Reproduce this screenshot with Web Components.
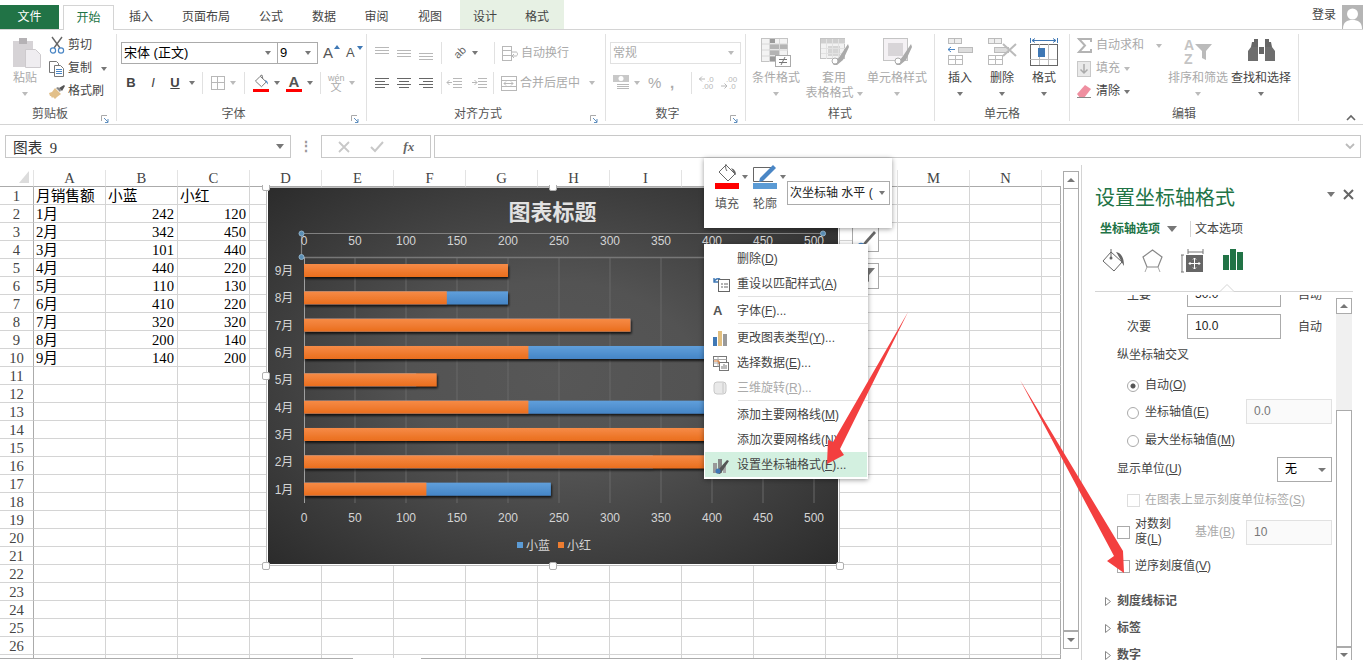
<!DOCTYPE html>
<html lang="zh-CN">
<head>
<meta charset="utf-8">
<title>Excel</title>
<style>
  html, body { margin: 0; height: 660px; overflow: hidden; background: #fff; }
  body { font: 12px/1.2 "Liberation Sans", "Noto Sans CJK SC", sans-serif; color: #444; }
</style>
</head>
<body>
<xl-app></xl-app>
<script>
// icon name -> [width, height, svg body]
const G = "#b8b8b8", D = "#666";
const hl = (x, y, w, c) => `<path d="M${x} ${y + .5}h${w}" stroke="${c}"/>`;
const grid3 = (x, y, w, h, c, f = "none") => `<rect x="${x + .5}" y="${y + .5}" width="${w}" height="${h}" fill="${f}" stroke="${c}"/>`;
const ICONS = {
  paste: [32, 30, `<g transform="translate(4 0)"><rect x="0" y="3" width="20" height="26" fill="#d6d3d6"/><rect x="6" y="0" width="8" height="6" fill="#b5b2b5"/><path d="M12.500 11.500h10l5 5v13h-15z" fill="#efedf0" stroke="#cdcacd"/></g>`],
  cut: [16, 17, `<path d="M3 0l8 11M13 0L5 11" stroke="#666" stroke-width="1.4" fill="none"/><circle cx="4" cy="13.500" r="2.600" fill="none" stroke="#4a86c5" stroke-width="1.200"/><circle cx="12" cy="13.500" r="2.600" fill="none" stroke="#4a86c5" stroke-width="1.200"/>`],
  copy: [16, 16, `<path d="M.5.5h7l2 2v9h-9z" fill="#fff" stroke="#777"/><path d="M5.500 4.500h6l3 3v8h-9z" fill="#fff" stroke="#777"/>${hl(7, 8, 6, "#4a86c5")}${hl(7, 10, 6, "#4a86c5")}${hl(7, 12, 6, "#4a86c5")}`],
  brush: [16, 14, `<path d="M0 8l3-1 3-4 6 6-4 3-2 2-2-2-1 1-1-2-1 0z" fill="#e2c08a"/><path d="M7 3l2-1 3 3-1 2z" fill="#888"/><path d="M10 3l5-3 1 1-3 5z" fill="#555"/>`],
  bucket: [17, 15, `<path d="M7 1.500l7 6.500-5.500 5.500-7-6.500z" fill="#fff" stroke="#666"/><path d="M7 1l2-1 1 4" fill="none" stroke="#666"/><path d="M12 6c3 0 4 2 4 5-1-1-2-3-4-5z" fill="#4a86c5"/>`],
  border: [14, 14, `${grid3(0, 0, 13, 13, G)}${hl(0, 6, 13, G)}<path d="M6.500 0v13" stroke="${G}"/>`],
  at: [14, 14, hl(0, 1, 14, G) + hl(0, 4, 14, G) + hl(0, 7, 14, G)],
  am: [14, 14, hl(0, 4, 14, G) + hl(0, 7, 14, G) + hl(0, 10, 14, G)],
  ab: [14, 14, hl(0, 7, 14, G) + hl(0, 10, 14, G) + hl(0, 13, 14, G)],
  al: [14, 12, hl(0, 1, 14, D) + hl(0, 4, 10, D) + hl(0, 7, 14, D) + hl(0, 10, 10, D)],
  ac: [14, 12, hl(0, 1, 14, D) + hl(2, 4, 10, D) + hl(0, 7, 14, D) + hl(2, 10, 10, D)],
  ar: [14, 12, hl(0, 1, 14, D) + hl(4, 4, 10, D) + hl(0, 7, 14, D) + hl(4, 10, 10, D)],
  indl: [15, 12, hl(6, 1, 9, G) + hl(6, 4, 9, G) + hl(6, 7, 9, G) + hl(6, 10, 9, G) + `<path d="M0 5.500h5M2.500 3L0 5.500 2.500 8" stroke="${G}" fill="none"/>`],
  indr: [15, 12, hl(6, 1, 9, G) + hl(6, 4, 9, G) + hl(6, 7, 9, G) + hl(6, 10, 9, G) + `<path d="M0 5.500h5M2.500 3L5 5.500 2.500 8" stroke="${G}" fill="none"/>`],
  wrap: [16, 15, `${grid3(0, 0, 9, 14, G)}${hl(0, 4, 9, G)}${hl(0, 9, 9, G)}<path d="M9 6h5c2 0 2 4 0 4h-3M12 8l-2 2 2 2" stroke="${G}" fill="none"/>`],
  merge: [16, 15, `${grid3(0, 0, 15, 14, G)}${hl(0, 4, 15, G)}${hl(0, 10, 15, G)}<path d="M3 7.500h9M5 5.500l-2 2 2 2M10 5.500l2 2-2 2" stroke="${G}" fill="none"/>`],
  money: [17, 16, `<rect x="0" y="0" width="16" height="7" fill="#c8c8c8"/><circle cx="8" cy="3.500" r="2.500" fill="#fff"/>${hl(4, 9, 12, G)}${hl(4, 11, 12, G)}${hl(4, 13, 12, G)}`],
  incd: [17, 17, `<path d="M0 4h6M3 1.500L.5 4 3 6.500" stroke="${G}" fill="none"/><text x="8" y="7" font-size="8" fill="${G}">.0</text><text x="3" y="14" font-size="8" fill="${G}">.00</text>`],
  decd: [17, 17, `<text x="5" y="7" font-size="8" fill="${G}">.00</text><path d="M0 11h6M3.500 8.500L6 11 3.500 13.500" stroke="${G}" fill="none"/><text x="8" y="14" font-size="8" fill="${G}">.0</text>`],
  cond: [30, 28, `<rect x=".5" y=".5" width="26" height="23" fill="#f3f3f3" stroke="#c4c4c4"/><rect x="8" y="1" width="6" height="4" fill="#9b9b9b"/><rect x="8" y="6" width="18" height="5" fill="#b4b4b4"/><rect x="8" y="12" width="10" height="5" fill="#b4b4b4"/><rect x="8" y="18" width="6" height="5" fill="#9b9b9b"/><path d="M8.500 1v23M18.500 1v23M1 6h26M1 12h26M1 18h26" stroke="#d8d8d8" fill="none"/><rect x="14.500" y="17.500" width="15" height="11" fill="#fff" stroke="#aaa"/><path d="M18 21.500h8M18 24.500h8M24 19l-4 8" stroke="#777" fill="none"/>`],
  tbl: [29, 28, `<rect x=".5" y=".5" width="24" height="20" fill="#f2f2f2" stroke="#c4c4c4"/><rect x="1" y="1" width="24" height="4" fill="#cfcfcf"/><rect x="8" y="8" width="12" height="10" fill="#d5d5d5"/><path d="M6.500 1v20M12.500 1v20M18.500 1v20M1 5.500h24M1 10.500h24M1 15.500h24" stroke="#e2e2e2" fill="none"/><path d="M13 27l7-9 8-12 1 3-6 13-6 5z" fill="#aaa"/><circle cx="15" cy="23" r="3" fill="#fff" stroke="#aaa"/>`],
  sty: [29, 28, `<rect x=".5" y=".5" width="24" height="22" fill="#f4f1f4" stroke="#c4c4c4"/><rect x="5" y="5" width="15" height="13" fill="#d8d5d8"/><path d="M13 27l7-9 8-12 1 3-6 13-6 5z" fill="#aaa"/><circle cx="15" cy="23" r="3" fill="#fff" stroke="#aaa"/>`],
  ins: [26, 27, `${grid3(1, 0, 13, 5, "#bbb", "#eee")}<path d="M7.500 0v5" stroke="#bbb"/>${grid3(11, 9, 14, 5, "#bbb", "#ddd")}<path d="M1 11.500h7M4 9l-3 2.500L4 14" stroke="#4a86c5" fill="none"/>${grid3(1, 17, 14, 9, "#bbb", "#fff")}${hl(1, 21, 14, "#bbb")}<path d="M8.500 17v9" stroke="#bbb"/>`],
  del: [30, 27, `${grid3(1, 0, 13, 5, "#bbb", "#eee")}<path d="M7.500 0v5" stroke="#bbb"/>${grid3(7, 9, 14, 5, "#bbb", "#ddd")}${grid3(1, 17, 14, 9, "#bbb", "#fff")}${hl(1, 21, 14, "#bbb")}<path d="M8.500 17v9" stroke="#bbb"/><path d="M16 6l13 12M29 6L16 18" stroke="#bbb" stroke-width="2" fill="none"/>`],
  fmt: [28, 28, `<path d="M.5 0v5M27.500 0v5M2 2.500h24M5 .5L2 2.500l3 2M23 .5l3 2-3 2" stroke="#3f78b5" fill="none"/>${grid3(0, 6, 27, 21, "#666", "#fff")}<path d="M9.500 6v21M18.500 6v21M0 21.500h27" stroke="#bbb" fill="none"/><rect x="8" y="10" width="7" height="9" fill="#3f78b5"/>`],
  sigma: [16, 15, `<path d="M1 1h14M14 4V1H2l6 6.500L2 14h12v-3" fill="none" stroke="#b4b4b4" stroke-width="2"/>`],
  fill: [15, 16, `<rect x=".5" y=".5" width="13" height="15" fill="#e9e9e9" stroke="#c8c8c8"/><path d="M7 3v9M3.500 8.500L7 12l3.500-3.500" stroke="#aaa" fill="none" stroke-width="1.500"/>`],
  erase: [14, 13, `<path d="M0 9l8-9 6 4-7 9H3z" fill="#ef8fa0"/><path d="M0 12.500h14" stroke="#888"/>`],
  sort: [30, 30, `<text x="1" y="12" font-size="14" font-weight="700" fill="#c4c4c4">A</text><text x="1" y="26" font-size="14" font-weight="700" fill="#c4c4c4">Z</text><path d="M12 6h17l-6 7v9l-4-2v-7z" fill="#bbb"/>`],
  find: [27, 24, `<path d="M3 9h7V1H6v3H4zM17 9h7l-1-5h-2V1h-4z" fill="#666"/><path d="M0 23V13l3-4h7v14zM17 23V9h7l3 4v10z" fill="#6e6e6e"/><rect x="11" y="9" width="5" height="7" fill="#666"/>`],
  pbars: [15, 15, `<rect y="6" width="4" height="9" fill="#3f78b5"/><rect x="5" y="0" width="4" height="15" fill="#e2bf7f"/><rect x="10" y="3" width="4" height="12" fill="#9a9a9a"/>`],
  reset: [17, 15, `<rect x="5.500" y="2.500" width="11" height="12" fill="#fff" stroke="#666"/><path d="M8 7h2M11 7h4M8 10h2M11 10h4" stroke="#666"/><path d="M1 5c1-3 4-4 6-3M1 1v4h4" stroke="#3f78b5" fill="none" stroke-width="1.400"/>`],
  seldata: [16, 15, `<rect x=".5" y=".5" width="13" height="10" fill="#fff" stroke="#777"/><path d="M.5 3.500h13M.5 7h13M5 .5v10" stroke="#aaa"/><rect x="6.500" y="6.500" width="9" height="8" fill="#fff" stroke="#777"/><path d="M9 13v-3M11 13V8M13 13v-4" stroke="#777"/><path d="M1 5h5v3" stroke="#d9742b" fill="none"/>`],
  cube: [14, 14, `<rect x="1" y="1" width="12" height="12" rx="3" fill="#e9e9e9" stroke="#c8c8c8"/><path d="M10 2v10" stroke="#c8c8c8"/>`],
  axis: [16, 17, `<rect x="0" y="6" width="4" height="10" fill="#999"/><rect x="5" y="2" width="4" height="14" fill="#888"/><rect x="10" y="7" width="3" height="9" fill="#aaa"/><path d="M3 16l3-4 8-9 2 1-6 9-3 4z" fill="#555"/><circle cx="5" cy="14" r="2.500" fill="#3f78b5"/>`],
  mfill: [24, 22, `<path d="M11 2l9 9-7 7-9-9z" fill="#fff" stroke="#666"/><path d="M11 1c-1 3 0 6 1 7" fill="none" stroke="#666"/><path d="M16 5c3 1 5 3 5 7-2-1-3-4-5-7z" fill="#666"/>`],
  mline: [24, 22, `<path d="M20 4.500H.5v14H20" fill="none" stroke="#666"/><path d="M7 15l13-13 3 3-13 13-4 1z" fill="#4a86c5"/>`],
  pfill: [24, 24, `<path d="M10 3l11 10-8 9L2 12z" fill="#fff" stroke="#666"/><path d="M10 0v9" stroke="#666"/><circle cx="10" cy="9" r="1.500" fill="#666"/><path d="M15 3c5 1 8 5 8 14-2-3-4-8-8-14z" fill="#666"/>`],
  ppent: [21, 24, `<path d="M10.500 1L20 8l-4 10H5L1 8z" fill="#fff" stroke="#888" stroke-width="1.200"/><path d="M5 18l-2 5M16 18l2 5" stroke="#aaa"/>`],
  psize: [22, 24, `<path d="M7 3h15M7 0v5M22 0v5M1 6v17M0 6h3M0 23h3" stroke="#777" fill="none"/><rect x="5" y="6" width="17" height="17" fill="#666"/><path d="M13.500 9v11M8 14.500h11M12 10.500l1.500-1.500 1.500 1.500M12 18.500l1.500 1.500 1.500-1.500M9.500 13L8 14.500 9.500 16M17.500 13l1.500 1.500-1.500 1.500" stroke="#fff" fill="none"/>`],
  pbar: [20, 21, `<rect x="0" y="6" width="6" height="15" fill="#217346"/><rect x="7" y="0" width="6" height="21" fill="#217346"/><rect x="14" y="3" width="6" height="18" fill="#217346"/>`]
};
const I = (n, style = "") => {
  const [w, h, b] = ICONS[n];
  return `<svg width="${w}" height="${h}" viewBox="0 0 ${w} ${h}" style="flex:none;display:block;overflow:visible;${style}">${b}</svg>`;
};

class XlTabs extends HTMLElement {
  constructor() {
    super();
    const tabs = [["插入", 54], ["页面布局", 76], ["公式", 54], ["数据", 52], ["审阅", 53], ["视图", 54]];
    this.attachShadow({ mode: "open" }).innerHTML = `
      <style>
        :host { display: flex; height: 30px; box-sizing: border-box; border-bottom: 1px solid #d4d4d4; }
        div { height: 29px; padding-top: 5px; box-sizing: border-box; text-align: center; line-height: 24px; color: #444; flex: none; }
        .file { width: 59px; height: 24px; margin-top: 5px; padding: 0; background: #217346; color: #fff; margin-right: 4px; }
        .on { width: 51px; height: 25px; margin-top: 5px; padding: 0; background: #fff; color: #217346; border: 1px solid #d4d4d4; border-bottom: 0; }
        .ctx { background: #e7f1e4; }
        .user { margin-left: auto; display: flex; padding: 5px 0 0; line-height: 20px; }
        .pic { width: 21px; height: 24px; margin-left: 6px; padding: 0; background: #b5b5b5; }
      </style>
      <div class="file">文件</div><div class="on">开始</div>
      ${tabs.map(([t, w]) => `<div style="width:${w}px">${t}</div>`).join("")}
      <div class="ctx" style="width:50px;margin-left:3px">设计</div><div class="ctx" style="width:54px">格式</div>
      <div class="user"><span>登录</span><div class="pic"><svg width="21" height="24"><circle cx="10.500" cy="9" r="5.500" fill="#fff"/><path d="M1 24c0-7 4-9 9.500-9S20 17 20 24z" fill="#fff"/></svg></div></div>`;
  }
}
customElements.define("xl-tabs", XlTabs);

class XlGroup extends HTMLElement {
  constructor() {
    super();
    const launch = this.hasAttribute("launcher");
    this.attachShadow({ mode: "open" }).innerHTML = `
      <style>
        :host { display: flex; flex-direction: column; box-sizing: border-box; flex: none; height: 87px; border-right: 1px solid #e1e1e1; position: relative; }
        .body { height: 70px; display: flex; }
        .lab { display: flex; height: 17px; line-height: 20px; color: #555; }
        .lab span { flex: 1; text-align: center; white-space: nowrap; }
        .launch { width: 16px; flex: none; padding-top: 6px; box-sizing: border-box; }
      </style>
      <div class="body"><slot></slot></div>
      <div class="lab"><span>${this.getAttribute("label")}</span>${launch ? `<div class="launch"><svg width="10" height="10"><path d="M1.500 7V1.500H7" stroke="#aaa" fill="none"/><path d="M4 4l4 4M8 5v3.500H5" stroke="#5f8fbf" fill="none"/></svg></div>` : ""}</div>`;
  }
}
customElements.define("xl-group", XlGroup);

class XlRibbon extends HTMLElement {
  constructor() {
    super();
    const css = `
      :host { display: flex; height: 95px; box-sizing: border-box; border-bottom: 1px solid #d4d4d4; padding-top: 4px; position: relative; }
      .big { display: flex; flex-direction: column; align-items: center; flex: none; color: #444; }
      .big .ic { height: 37px; padding-top: 4px; box-sizing: border-box; }
      .big span, .big .ln { height: 15px; line-height: 15px; white-space: nowrap; display: flex; align-items: center; }
      .off, .off * { color: #aaa; }
      .col { display: flex; flex-direction: column; flex: none; }
      .sm { height: 23px; display: flex; align-items: center; white-space: nowrap; }
      .stack { flex: none; padding-top: 8px; box-sizing: border-box; }
      .row { height: 22px; display: flex; align-items: center; margin-bottom: 8px; }
      .dn { flex: none; width: 0; height: 0; border: 3.500px solid transparent; border-top: 4px solid #777; border-bottom: 0; }
      .dn.d { border-top-color: #bbb; }
      .sep { flex: none; width: 1px; height: 22px; background: #e1e1e1; }
      .sel { box-sizing: border-box; height: 22px; border: 1px solid #ababab; display: flex; align-items: center; padding: 0 6px 0 2px; flex: none; color: #000; font-size: 13px; }
      .sel .dn { margin-left: auto !important; }
      .sel.off { border-color: #e1e1e1; color: #aaa; font-size: 12px; }
      .b { flex: none; width: 20px; text-align: center; font-size: 13px; color: #444; }
      .u { width: 16px; flex: none; display: flex; flex-direction: column; align-items: center; }
      .u i { display: block; width: 16px; height: 3px; background: #f00; margin-top: 1px; }
      .ltr { font-size: 15px; line-height: 13px; font-weight: 700; color: #555; }
      .tiny { font-size: 9px; line-height: 9px; color: #aaa; text-align: center; }
      .grow { flex: none; font-size: 15px; color: #555; position: relative; width: 14px; }
      .grow i { position: absolute; right: -3px; top: 1px; width: 0; height: 0; border: 3px solid transparent; border-bottom: 4px solid #3f78b5; border-top: 0; }
      .grow.s { font-size: 13px; } .grow.s i { border-bottom: 0; border-top: 4px solid #3f78b5; }
      .hide { flex: none; align-self: flex-end; margin: 0 0 3px 47px; }
    `;
    const dn = (ml = 0, d = false) => `<b class="dn${d ? " d" : ""}" style="margin-left:${ml}px"></b>`;
    const sep = ml => `<b class="sep" style="margin-left:${ml}px"></b>`;
    const big = (icon, w, l1, l2 = dn(), off = false, ml = 0) =>
      `<div class="big${off ? " off" : ""}" style="width:${w}px;margin-left:${ml}px"><div class="ic">${I(icon)}</div><span>${l1}</span><div class="ln">${l2}</div></div>`;
    this.attachShadow({ mode: "open" }).innerHTML = `
      <style>${css}</style>
      <xl-group label="剪贴板" launcher style="width:117px">
        ${big("paste", 30, "粘贴", dn(0, true), true, 10)}
        <div class="col" style="margin-left:9px">
          <div class="sm">${I("cut", "margin-right:3px")}剪切</div>
          <div class="sm">${I("copy", "margin-right:3px")}复制${dn(9)}</div>
          <div class="sm">${I("brush", "margin-right:3px")}格式刷</div>
        </div>
      </xl-group>
      <xl-group label="字体" launcher style="width:250px">
        <div class="stack" style="margin-left:4px">
          <div class="row">
            <div class="sel" style="width:157px">宋体 (正文)${dn()}</div>
            <div class="sel" style="width:41px;margin-left:-1px">9${dn()}</div>
            <span class="grow" style="margin-left:5px">A<i></i></span>
            <span class="grow s" style="margin-left:9px">A<i></i></span>
          </div>
          <div class="row">
            <b class="b">B</b><i class="b" style="margin-left:2px">I</i><u class="b" style="margin-left:2px;font-weight:700">U</u>${dn(4)}${sep(7)}
            <span style="margin-left:8px">${I("border")}</span>${dn(5, true)}${sep(8)}
            <span class="u" style="margin-left:8px">${I("bucket", "width:15px;height:13px")}<i></i></span>${dn(5)}
            <span class="u" style="margin-left:6px"><span class="ltr">A</span><i></i></span>${dn(5)}${sep(7)}
            <span class="tiny" style="margin-left:7px;width:16px">wén<br><span style="font-size:11px">文</span></span>${dn(5, true)}
          </div>
        </div>
      </xl-group>
      <xl-group label="对齐方式" launcher style="width:239px">
        <div class="stack" style="margin-left:8px">
          <div class="row">
            ${I("at")}<span style="margin-left:8px">${I("am")}</span><span style="margin-left:8px">${I("ab")}</span>${sep(8)}
            <span style="margin-left:8px;width:20px;transform:rotate(-45deg);color:#666;font-size:11px;text-align:center">ab</span>${dn(2)}${sep(16)}
            <span style="margin-left:7px">${I("wrap")}</span><span class="off" style="margin-left:3px;white-space:nowrap">自动换行</span>
          </div>
          <div class="row">
            ${I("al")}<span style="margin-left:8px">${I("ac")}</span><span style="margin-left:8px">${I("ar")}</span>${sep(8)}
            <span style="margin-left:5px">${I("indl")}</span><span style="margin-left:10px">${I("indr")}</span>${sep(6)}
            <span style="margin-left:7px">${I("merge")}</span><span class="off" style="margin-left:3px;white-space:nowrap">合并后居中</span>${dn(9, true)}
          </div>
        </div>
      </xl-group>
      <xl-group label="数字" launcher style="width:140px">
        <div class="stack" style="margin-left:4px">
          <div class="row"><div class="sel off" style="width:131px">常规${dn(0, true)}</div></div>
          <div class="row">
            <span style="margin-left:3px">${I("money")}</span>${dn(4, true)}
            <span class="off" style="margin-left:8px;font-size:15px;width:16px">%</span>
            <span class="off" style="margin-left:6px;font-size:15px;width:12px;font-weight:700">,</span>${sep(9)}
            <span style="margin-left:7px">${I("incd")}</span><span style="margin-left:5px">${I("decd")}</span>
          </div>
        </div>
      </xl-group>
      <xl-group label="样式" style="width:189px">
        ${big("cond", 60, "条件格式", dn(0, true), true)}
        ${big("tbl", 56, "套用", "表格格式" + dn(3, true), true)}
        ${big("sty", 70, "单元格样式", dn(0, true), true)}
      </xl-group>
      <xl-group label="单元格" style="width:135px">
        ${big("ins", 42, "插入", dn(), false, 4)}
        ${big("del", 42, "删除")}
        ${big("fmt", 42, "格式")}
      </xl-group>
      <xl-group label="编辑" style="width:229px">
        <div class="col" style="margin-left:7px;width:85px">
          <div class="sm off">${I("sigma", "margin-right:3px")}自动求和${dn(12, true)}</div>
          <div class="sm off">${I("fill", "margin-right:4px")}填充${dn(4, true)}</div>
          <div class="sm">${I("erase", "margin:0 5px 0 0")}清除${dn(4)}</div>
        </div>
        ${big("sort", 72, "排序和筛选", dn(0, true), true)}
        ${big("find", 54, "查找和选择")}
      </xl-group>
      <svg class="hide" width="10" height="7"><path d="M1 6l4-4 4 4" stroke="#666" stroke-width="1.600" fill="none"/></svg>`;
  }
}
customElements.define("xl-ribbon", XlRibbon);

class XlFormula extends HTMLElement {
  constructor() {
    super();
    this.attachShadow({ mode: "open" }).innerHTML = `
      <style>
        :host { display: flex; height: 40px; padding: 10px 2px 0 5px; box-sizing: border-box; }
        div { box-sizing: border-box; height: 23px; border: 1px solid #c8c8c8; flex: none; display: flex; align-items: center; }
        .name { width: 286px; padding: 0 6px 0 7px; font: 14.670px "Liberation Serif", "Noto Sans CJK SC", serif; color: #333; white-space: pre; }
        .dn { margin-left: auto; width: 0; height: 0; border: 4px solid transparent; border-top: 5px solid #777; border-bottom: 0; }
        .dots { width: 30px; border: 0; justify-content: center; color: #999; font-size: 14px; font-weight: 700; }
        .fx { width: 110px; margin-right: 3px; justify-content: space-around; padding: 0 6px; color: #c8c8c8; }
        .fx i { font: italic 700 13px "Liberation Serif", serif; color: #666; }
        .in { flex: 1; justify-content: flex-end; padding-right: 4px; }
      </style>
      <div class="name">图表  9<b class="dn"></b></div>
      <div class="dots">⋮</div>
      <div class="fx">
        <svg width="12" height="12"><path d="M1 1l10 10M11 1L1 11" stroke="#c8c8c8" stroke-width="1.800"/></svg>
        <svg width="14" height="12"><path d="M1 6l4 4 8-9" stroke="#c8c8c8" stroke-width="2" fill="none"/></svg>
        <i>fx</i>
      </div>
      <div class="in"><svg width="12" height="8"><path d="M2 1l4 4 4-4" stroke="#bbb" stroke-width="1.800" fill="none"/></svg></div>`;
  }
}
customElements.define("xl-formula", XlFormula);

class XlSheet extends HTMLElement {
  constructor() {
    super();
    const data = [["月销售额", "小蓝", "小红"], ["1月", 242, 120], ["2月", 342, 450], ["3月", 101, 440], ["4月", 440, 220], ["5月", 110, 130], ["6月", 410, 220], ["7月", 320, 320], ["8月", 200, 140], ["9月", 140, 200]];
    const cols = "ABCDEFGHIJKLMN".split("");
    let cells = `<div class="h corner"><svg width="12" height="14"><path d="M11 1v12H1z" fill="#dcdcdc"/></svg></div>`;
    cols.forEach(c => { cells += `<div class="h">${c}</div>`; });
    cells += `<div class="h end"></div>`;
    for (let r = 1; r <= 27; r++) {
      cells += `<div class="rh">${r <= 26 ? r : ""}</div>`;
      for (let c = 0; c < 14; c++) {
        const v = data[r - 1] ? data[r - 1][c] : undefined;
        cells += `<div class="c${typeof v === "number" ? " n" : ""}">${v === undefined ? "" : v}</div>`;
      }
      cells += `<div class="c end"></div>`;
    }
    this.attachShadow({ mode: "open" }).innerHTML = `
      <style>
        :host { display: flex; flex-direction: column; width: 1081px; flex: none; padding-top: 5px; box-sizing: border-box; position: relative; height: 495px; }
        .top { display: flex; height: 488px; overflow: hidden; flex: none; }
        .grid { display: grid; grid-template-columns: 34px repeat(14, 72px) 19px; grid-template-rows: 17px; grid-auto-rows: 18px; width: 1061px; flex: none; font: 14.670px/17px "Liberation Serif", "Noto Sans CJK SC", serif; color: #000; }
        .h, .rh, .c { box-sizing: border-box; overflow: hidden; white-space: nowrap; }
        .h { border-right: 1px solid #e3e3e3; border-bottom: 1px solid #ababab; text-align: center; color: #444; }
        .h.end { border-right: 0; width: 19px; }
        .corner { display: flex; justify-content: flex-end; padding-right: 3px; }
        .rh { border-right: 1px solid #ababab; border-bottom: 1px solid #d4d4d4; text-align: center; color: #444; line-height: 19px; }
        .c { border-right: 1px solid #d4d4d4; border-bottom: 1px solid #d4d4d4; padding: 0 2px; line-height: 19px; }
        .c.n { text-align: right; padding-right: 3px; }
        .c.end { border-right-color: #ababab; }
        .bar { width: 16px; flex: none; margin: 1px 0 0 2px; border: 1px solid #ababab; border-width: 0 1px; height: 472px; box-sizing: border-box; display: flex; flex-direction: column; }
        .btn { height: 16px; flex: none; border: 1px solid #ababab; margin: 0 -1px; display: flex; align-items: center; justify-content: center; }
        .up { width: 0; height: 0; border: 4px solid transparent; border-bottom: 4px solid #777; border-top: 0; }
        .down { margin-top: auto; border-width: 1px; }
        .down i { width: 0; height: 0; border: 4px solid transparent; border-top: 4px solid #777; border-bottom: 0; }
        .thumb { height: 441px; border-bottom: 1px solid #ababab; flex: none; }
        .foot { display: flex; height: 7px; flex: none; }
        .foot i { display: block; border-top: 1px solid #ababab; }
      </style>
      <div class="top">
        <div class="grid">${cells}</div>
        <div class="bar"><div class="btn"><b class="up"></b></div><div class="thumb"></div><div class="btn down"><i></i></div></div>
      </div>
      <div class="foot"><i style="width:353px"></i><i style="width:640px;margin-left:68px"></i></div>
      <slot></slot>`;
  }
}
customElements.define("xl-sheet", XlSheet);

class XlChart extends HTMLElement {
  constructor() {
    super();
    const X = v => 304 + v * 1.02;
    const vals = [[140, 200, "9月"], [200, 140, "8月"], [320, 320, "7月"], [410, 220, "6月"], [110, 130, "5月"], [440, 220, "4月"], [101, 440, "3月"], [342, 450, "2月"], [242, 120, "1月"]];
    let s = "";
    const ticks = [0, 50, 100, 150, 200, 250, 300, 350, 400, 450, 500];
    ticks.slice(1).forEach(t => { s += `<path d="M${X(t)} 257V503" stroke="#686868"/>`; });
    s += `<path d="M301 257.500H814" stroke="#777" stroke-width="1.500"/><path d="M304.500 257V503" stroke="#a0a0a0"/>`;
    s += `<path d="M301.500 257V233.500H823" fill="none" stroke="#808080" stroke-width="1.200"/>`;
    ticks.forEach(t => {
      s += `<text x="${X(t)}" y="245" class="t">${t}</text><text x="${X(t)}" y="522" class="t">${t}</text>`;
    });
    vals.forEach(([b, r, m], i) => {
      const y = 264 + i * 27.33;
      s += `<text x="284" y="${y + 11}" class="t">${m}</text>`;
      s += `<g filter="url(#sh)"><rect x="304" y="${y}" width="${b * 1.02}" height="13" fill="url(#bl)"/><rect x="304" y="${y}" width="${r * 1.02}" height="13" fill="url(#or)"/></g>`;
    });
    s += [[301.5, 233.5], [301.5, 257], [823, 233.5]].map(([x, y]) => `<circle cx="${x}" cy="${y}" r="2.500" fill="#5b8fb5" stroke="#8fb2cc"/>`).join("");
    const handle = (x, y) => `<rect x="${x - 3.5}" y="${y - 3.5}" width="7" height="7" rx="1.500" fill="#fff" stroke="#b0b0b0"/>`;
    this.attachShadow({ mode: "open" }).innerHTML = `
      <style>
        :host { display: block; position: absolute; left: 260px; top: 20px; width: 590px; height: 390px; }
        svg { display: block; }
        text { font-family: "Liberation Sans", "Noto Sans CJK SC", sans-serif; }
        .t { font-size: 12px; fill: #d4d4d4; text-anchor: middle; }
      </style>
      <svg width="590" height="390" viewBox="260 185 590 390">
        <defs>
          <radialGradient id="bg" cx="50%" cy="50%" r="72%"><stop offset="0" stop-color="#575757"/><stop offset=".35" stop-color="#535353"/><stop offset="1" stop-color="#2a2a2a"/></radialGradient>
          <linearGradient id="or" x1="0" y1="0" x2="0" y2="1"><stop offset="0" stop-color="#f68b47"/><stop offset="1" stop-color="#ea6e1d"/></linearGradient>
          <linearGradient id="bl" x1="0" y1="0" x2="0" y2="1"><stop offset="0" stop-color="#609fdb"/><stop offset="1" stop-color="#4585c6"/></linearGradient>
          <filter id="sh" x="-5%" y="-30%" width="110%" height="190%"><feDropShadow dx="1" dy="2" stdDeviation="1.200" flood-color="#000" flood-opacity=".75"/></filter>
        </defs>
        <rect x="266.500" y="187.500" width="573" height="378" fill="#fff" stroke="#bdbdbd"/>
        <rect x="268" y="188" width="570" height="376" fill="url(#bg)"/>
        <text x="552.500" y="220" text-anchor="middle" style="font-size:22px;font-weight:700;fill:#e2e2e2">图表标题</text>
        ${s}
        <rect x="517" y="542" width="6" height="6" fill="#5b9bd5"/>
        <text x="526" y="550" style="font-size:12px;fill:#d4d4d4">小蓝</text>
        <rect x="558" y="542" width="6" height="6" fill="#ed7d31"/>
        <text x="567" y="550" style="font-size:12px;fill:#d4d4d4">小红</text>
        ${handle(266, 187)}${handle(553, 187)}${handle(266, 376)}${handle(266, 566)}${handle(553, 566)}${handle(840, 566)}
      </svg>`;
  }
}
customElements.define("xl-chart", XlChart);

class XlChartTools extends HTMLElement {
  constructor() {
    super();
    this.attachShadow({ mode: "open" }).innerHTML = `
      <style>
        :host { position: absolute; left: 852px; top: 61px; display: flex; flex-direction: column; gap: 11px; width: 26px; }
        div { box-sizing: border-box; width: 27px; height: 26px; background: #fff; border: 1px solid #a8a8a8; }
        svg { display: block; }
      </style>
      <div><svg width="25" height="24"><path d="M9 18l4-5 8-9 2 2-8 9-5 5z" fill="#666"/><circle cx="8" cy="20" r="3.500" fill="none" stroke="#4a86c5" stroke-width="1.400"/></svg></div>
      <div><svg width="25" height="24"><path d="M8 4h14l-6 7v7l-3-2v-5z" fill="#777"/></svg></div>`;
  }
}
customElements.define("xl-chart-tools", XlChartTools);

class XlMinibar extends HTMLElement {
  constructor() {
    super();
    this.attachShadow({ mode: "open" }).innerHTML = `
      <style>
        :host { position: absolute; left: 704px; top: -7px; box-sizing: border-box; width: 188px; height: 70px; background: #fff; box-shadow: 0 1px 5px rgba(0,0,0,.4); display: flex; padding: 5px 0 0 11px; color: #555; }
        .b { display: flex; flex-direction: column; align-items: center; width: 24px; flex: none; }
        .b i { display: block; width: 24px; height: 6px; margin-top: -2px; }
        .b span { margin-top: 8px; line-height: 15px; white-space: nowrap; }
        .dn { flex: none; margin: 12px 0 0 3px; width: 0; height: 0; border: 3.500px solid transparent; border-top: 4px solid #777; border-bottom: 0; }
        .sel { box-sizing: border-box; flex: none; width: 103px; height: 24px; margin: 18px 0 0 1px; border: 1px solid #ababab; display: flex; align-items: center; padding: 0 4px 0 2px; color: #222; white-space: pre; overflow: hidden; }
        .sel .dn { margin: 0 0 0 auto; }
      </style>
      <div class="b">${I("mfill")}<i style="background:#f00"></i><span>填充</span></div><b class="dn"></b>
      <div class="b" style="margin-left:5px">${I("mline")}<i style="background:#5b9bd5"></i><span>轮廓</span></div><b class="dn"></b>
      <div class="sel">次坐标轴 水平 (<b class="dn"></b></div>`;
  }
}
customElements.define("xl-minibar", XlMinibar);

class XlMenuItem extends HTMLElement {
  constructor() {
    super();
    const icon = this.getAttribute("icon");
    this.attachShadow({ mode: "open" }).innerHTML = `
      <style>
        :host { display: flex; align-items: center; height: 25px; box-sizing: border-box; white-space: nowrap; color: #444; margin: 0 1px; padding-top: 1px; }
        :host([disabled]) { color: #aaa; }
        :host([on]) { background: #d3f0e0; }
        .i { width: 32px; padding-left: 8px; box-sizing: border-box; flex: none; font-weight: 700; font-size: 13px; color: #555; }
      </style>
      <div class="i">${icon === "A" ? "A" : icon ? I(icon) : ""}</div><slot></slot>`;
  }
}
customElements.define("xl-menu-item", XlMenuItem);

class XlMenu extends HTMLElement {
  constructor() {
    super();
    this.attachShadow({ mode: "open" }).innerHTML = `
      <style>
        :host { position: absolute; left: 704px; top: 79px; box-sizing: border-box; width: 164px; height: 235px; padding-top: 2px; background: #fff; box-shadow: 0 1px 5px rgba(0,0,0,.4); display: block; }
      </style><slot></slot>`;
  }
}
customElements.define("xl-menu", XlMenu);

class XlPane extends HTMLElement {
  constructor() {
    super();
    const radio = (on, t) => `<span class="rd${on ? " on" : ""}"></span><span>${t}</span>`;
    const sec = t => `<div class="sec"><svg width="6" height="9"><path d="M.5.5l5 4-5 4z" fill="#fff" stroke="#888"/></svg><b>${t}</b></div>`;
    this.attachShadow({ mode: "open" }).innerHTML = `
      <style>
        :host { display: flex; flex-direction: column; flex: 1; height: 495px; box-sizing: border-box; border-left: 1px solid #d4d4d4; margin-left: 0; color: #444; overflow: hidden; }
        .head { height: 48px; flex: none; display: flex; align-items: flex-end; padding: 0 9px 0 13px; box-sizing: border-box; }
        h1 { margin: 0; font-size: 20px; font-weight: 400; color: #217346; line-height: 30px; flex: 1; }
        .ctl { display: flex; align-items: center; gap: 8px; height: 20px; margin-bottom: 9px; }
        .tri { width: 0; height: 0; border: 4px solid transparent; border-top: 5px solid #777; border-bottom: 0; display: block; }
        .tabs { height: 20px; margin-top: 6px; display: flex; align-items: center; padding-left: 18px; flex: none; }
        .tabs b { color: #217346; }
        .tabs .v { width: 1px; height: 16px; background: #d4d4d4; margin: 0 4px 0 13px; }
        .icons { display: flex; margin-top: 10px; padding-left: 19px; height: 26px; flex: none; align-items: flex-start; }
        .rule { height: 17px; flex: none; margin: 0 10px 0 13px; position: relative; border-bottom: 1px solid #d4d4d4; box-sizing: border-box; }
        .rule svg { position: absolute; left: 124px; bottom: -1px; }
        .view { display: flex; height: 368px; margin-top: 3px; flex: none; overflow: hidden; }
        .content { width: 254px; flex: none; padding-left: 35px; box-sizing: border-box; margin-top: -13px; }
        .r { display: flex; align-items: center; white-space: nowrap; box-sizing: border-box; padding-top: 2px; }
        .inp { box-sizing: border-box; height: 25px; border: 1px solid #ababab; display: flex; align-items: center; padding-left: 7px; color: #222; flex: none; margin-top: -2px; }
        .inp.off { border-color: #e1e1e1; background: #fafafa; color: #777; width: 86px; margin-left: auto; }
        .rd { width: 12px; height: 12px; box-sizing: border-box; border: 1px solid #aaa; border-radius: 50%; margin: 0 6px 0 10px; flex: none; background: #fff; }
        .rd.on { background: radial-gradient(circle, #555 0 2px, #fff 3px); }
        .cb { width: 13px; height: 13px; box-sizing: border-box; border: 1px solid #aaa; flex: none; background: #fff; margin-right: 5px; }
        .cb.off { border-color: #ddd; }
        .sec { height: 27px; display: flex; align-items: center; margin-left: -12px; color: #555; }
        .sec svg { margin-right: 6px; }
        .sb { width: 16px; flex: none; margin: 3px 0 0 0; background: #f0f0f0; display: flex; flex-direction: column; height: 365px; }
        .sb .bt { box-sizing: border-box; height: 16px; background: #fff; border: 1px solid #ababab; flex: none; display: flex; align-items: center; justify-content: center; }
        .sb .t { height: 96px; flex: none; }
        .sb .th { flex: 1; background: #fff; border: 1px solid #ababab; box-sizing: border-box; }
        .up { width: 0; height: 0; border: 4px solid transparent; border-bottom: 4px solid #777; border-top: 0; }
        .dw { width: 0; height: 0; border: 4px solid transparent; border-top: 4px solid #777; border-bottom: 0; }
        u { text-decoration-thickness: 1px; }
        .dim { color: #aaa; }
      </style>
      <div class="head"><h1>设置坐标轴格式</h1><div class="ctl"><b class="tri"></b><svg width="11" height="11"><path d="M1 1l9 9M10 1l-9 9" stroke="#666" stroke-width="2"/></svg></div></div>
      <div class="tabs"><b>坐标轴选项</b><b class="tri" style="margin-left:7px;border-width:5px 5px 0;border-top-width:6px"></b><i class="v"></i><span>文本选项</span></div>
      <div class="icons">${I("pfill")}${I("ppent", "margin-left:17px")}${I("psize", "margin-left:18px")}${I("pbar", "margin-left:20px")}</div>
      <div class="rule"><svg width="16" height="9"><path d="M0 8.500h1l7-7 7 7h1" fill="#fff" stroke="#d4d4d4"/></svg></div>
      <div class="view">
        <div class="content">
          <div class="r" style="height:25px;padding-left:10px"><span style="width:60px">主要</span><div class="inp" style="width:94px">50.0</div><span style="margin-left:17px">自动</span></div>
          <div class="r" style="height:25px;margin-top:7px;padding-left:10px"><span style="width:60px">次要</span><div class="inp" style="width:94px">10.0</div><span style="margin-left:17px">自动</span></div>
          <div class="r" style="height:18px;margin-top:6px">纵坐标轴交叉</div>
          <div class="r" style="height:25px;margin-top:9px;width:215px">${radio(true, "自动(<u>O</u>)")}</div>
          <div class="r" style="height:25px;margin-top:2px;width:215px">${radio(false, "坐标轴值(<u>E</u>)")}<div class="inp off">0.0</div></div>
          <div class="r" style="height:25px;margin-top:3px;width:215px">${radio(false, "最大坐标轴值(<u>M</u>)")}</div>
          <div class="r" style="height:25px;margin-top:5px;width:215px;padding-top:0"><span>显示单位(<u>U</u>)</span><div class="inp" style="width:55px;margin:0 0 0 auto;padding-right:5px;color:#000">无<b class="tri" style="margin-left:auto;border-width:4px 4.500px 0"></b></div></div>
          <div class="r dim" style="height:24px;margin-top:5px;padding-left:10px"><span class="cb off" style="margin-right:5px"></span>在图表上显示刻度单位标签(<u>S</u>)</div>
          <div class="r" style="height:30px;margin-top:6px;width:215px;padding-top:0"><span class="cb"></span><span style="width:42px;line-height:15px;margin-right:18px;flex:none">对数刻<br>度(<u>L</u>)</span><span class="dim">基准(<u>B</u>)</span><div class="inp off" style="margin-top:0">10</div></div>
          <div class="r" style="height:24px;margin-top:6px"><span class="cb"></span>逆序刻度值(<u>V</u>)</div>
          <div style="margin-top:11px">${sec("刻度线标记")}${sec("标签")}${sec("数字")}</div>
        </div>
        <div class="sb"><div class="bt"><b class="up"></b></div><div class="t"></div><div class="th"></div><div class="bt"><b class="dw"></b></div></div>
      </div>`;
  }
}
customElements.define("xl-pane", XlPane);

class XlMenuSep extends HTMLElement {
  constructor() {
    super();
    this.attachShadow({ mode: "open" }).innerHTML = `<style>:host { display: block; height: 2px; margin-left: 34px; border-top: 1px solid #e1e1e1; box-sizing: border-box; }</style>`;
  }
}
customElements.define("xl-menu-sep", XlMenuSep);

class XlApp extends HTMLElement {
  constructor() {
    super();
    this.attachShadow({ mode: "open" }).innerHTML = `
      <style>
        :host { display: flex; flex-direction: column; width: 1363px; height: 660px; overflow: hidden; position: relative; }
        .main { display: flex; height: 495px; flex: none; }
        .arrows { position: absolute; left: 0; top: 0; pointer-events: none; }
      </style>
      <xl-tabs></xl-tabs>
      <xl-ribbon></xl-ribbon>
      <xl-formula></xl-formula>
      <div class="main">
        <xl-sheet>
          <xl-chart></xl-chart>
          <xl-chart-tools></xl-chart-tools>
          <xl-minibar></xl-minibar>
          <xl-menu>
            <xl-menu-item>删除(<u>D</u>)</xl-menu-item>
            <xl-menu-item icon="reset">重设以匹配样式(<u>A</u>)</xl-menu-item>
            <xl-menu-sep></xl-menu-sep>
            <xl-menu-item icon="A">字体(<u>F</u>)...</xl-menu-item>
            <xl-menu-sep></xl-menu-sep>
            <xl-menu-item icon="pbars">更改图表类型(<u>Y</u>)...</xl-menu-item>
            <xl-menu-item icon="seldata">选择数据(<u>E</u>)...</xl-menu-item>
            <xl-menu-item icon="cube" disabled>三维旋转(<u>R</u>)...</xl-menu-item>
            <xl-menu-sep></xl-menu-sep>
            <xl-menu-item>添加主要网格线(<u>M</u>)</xl-menu-item>
            <xl-menu-item>添加次要网格线(<u>N</u>)</xl-menu-item>
            <xl-menu-item icon="axis" on>设置坐标轴格式(<u>F</u>)...</xl-menu-item>
          </xl-menu>
        </xl-sheet>
        <xl-pane></xl-pane>
      </div>
      <svg class="arrows" width="1363" height="660" fill="#f33f3f">
        <polygon points="908,312 840,449 844,455 827,464 828,440 833,442"/>
        <polygon points="1020,380 1123,551 1124,573 1107,561 1114,556"/>
      </svg>`;
  }
}
customElements.define("xl-app", XlApp);
</script>
</body>
</html>
